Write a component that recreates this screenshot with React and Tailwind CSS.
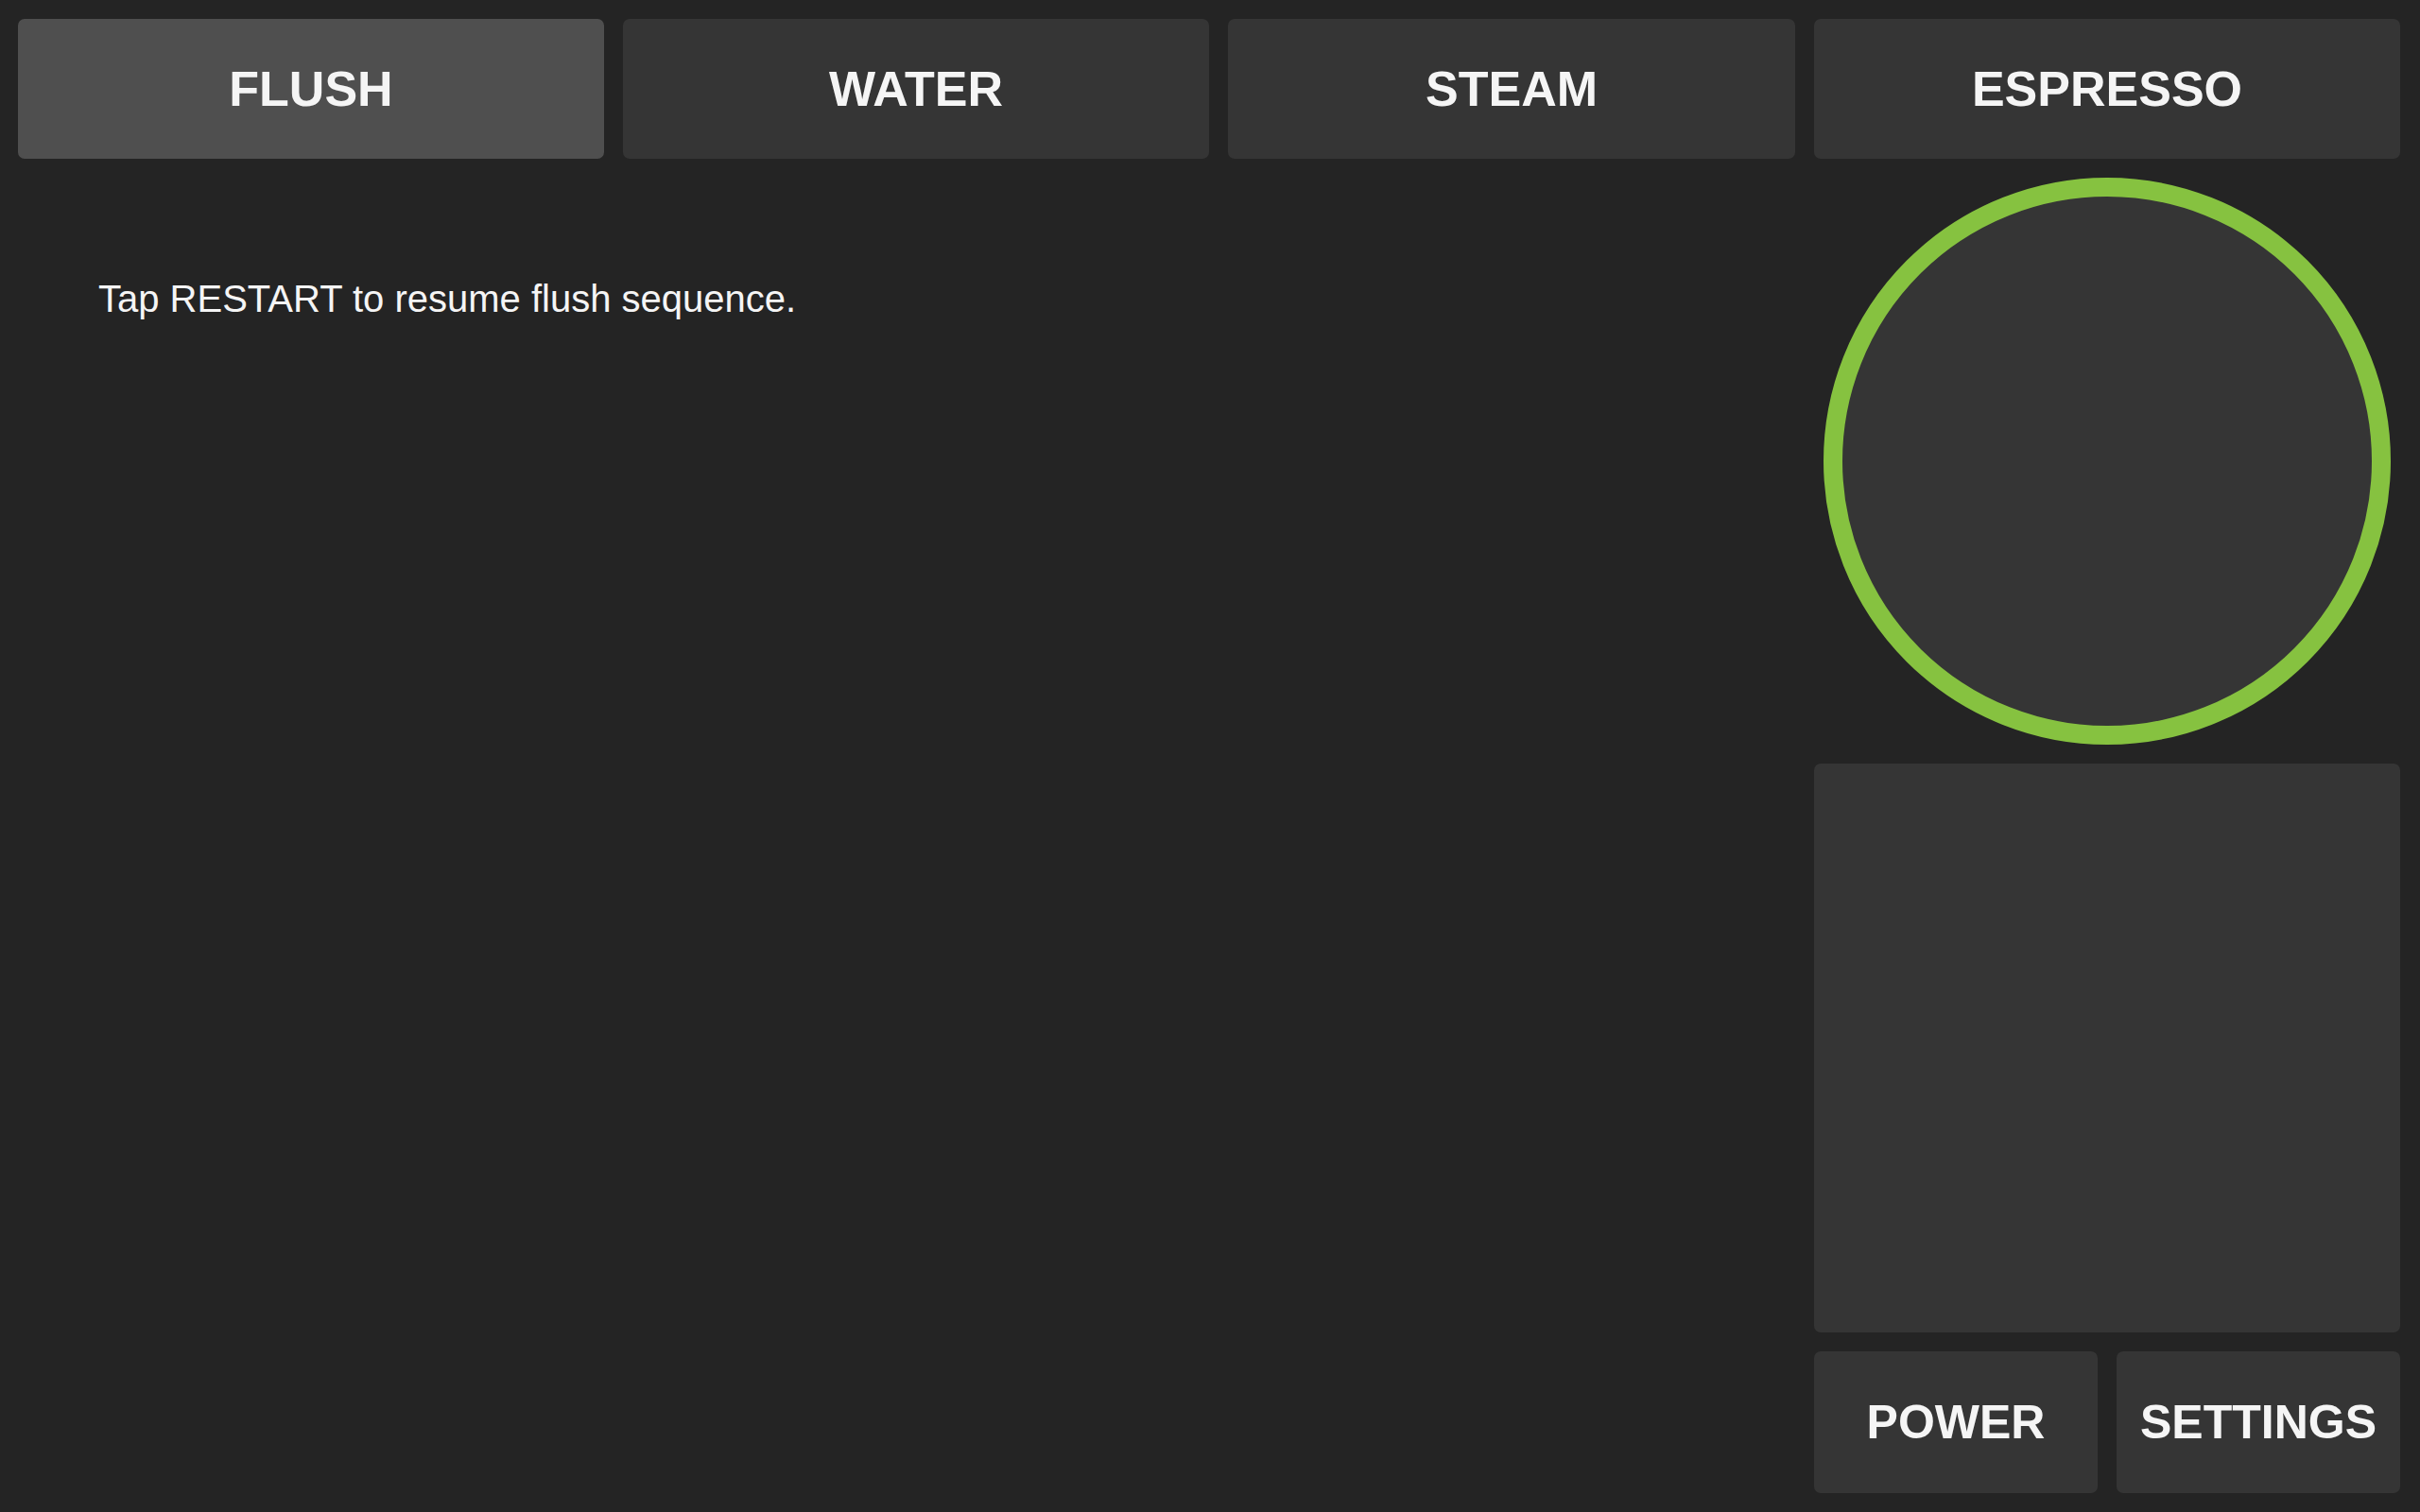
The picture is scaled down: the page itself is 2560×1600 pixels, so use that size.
import React from 'react';

const FONT = { fontFamily: '"Liberation Sans", Arial, sans-serif' };

const TABS = ['FLUSH', 'WATER', 'STEAM', 'ESPRESSO'];

const TabButton = ({ label, active }) => (
  <button
    className={
      'flex items-center justify-center rounded-[7px] text-[52px] font-bold text-[#f5f5f5] ' +
      (active ? 'bg-[#4f4f4f]' : 'bg-[#353535]')
    }
  >
    {label}
  </button>
);

const App = () => {
  return (
    <div style={FONT} className="w-[2560px] h-[1600px] bg-[#242424] pt-5 pb-5 pl-[19px] pr-[21px] flex flex-col gap-5 overflow-hidden">
      <div className="grid grid-cols-[620px_620px_600px_620px] gap-5 h-[148px] shrink-0">
        {TABS.map((t) => (
          <TabButton key={t} label={t} active={t === 'FLUSH'} />
        ))}
      </div>

      <div className="flex flex-1 gap-5 min-h-0">
        <div className="flex-1 pl-[85px] pt-[105px]">
          <p className="text-[40px] leading-[46px] text-[#f5f5f5]">Tap RESTART to resume flush sequence.</p>
        </div>

        <div className="w-[620px] flex flex-col gap-5">
          <div className="flex justify-center shrink-0">
            <div className="w-[600px] h-[600px] rounded-full border-[20px] border-[#86c240] bg-[#353535]" />
          </div>
          <div className="flex-1 rounded-[7px] bg-[#353535]" />
          <div className="grid grid-cols-2 gap-5 h-[150px] shrink-0">
            <button className="flex items-center justify-center rounded-[7px] bg-[#353535] text-[50px] font-bold text-[#f5f5f5]">
              POWER
            </button>
            <button className="flex items-center justify-center rounded-[7px] bg-[#353535] text-[50px] font-bold text-[#f5f5f5]">
              SETTINGS
            </button>
          </div>
        </div>
      </div>
    </div>
  );
};

export default App;
